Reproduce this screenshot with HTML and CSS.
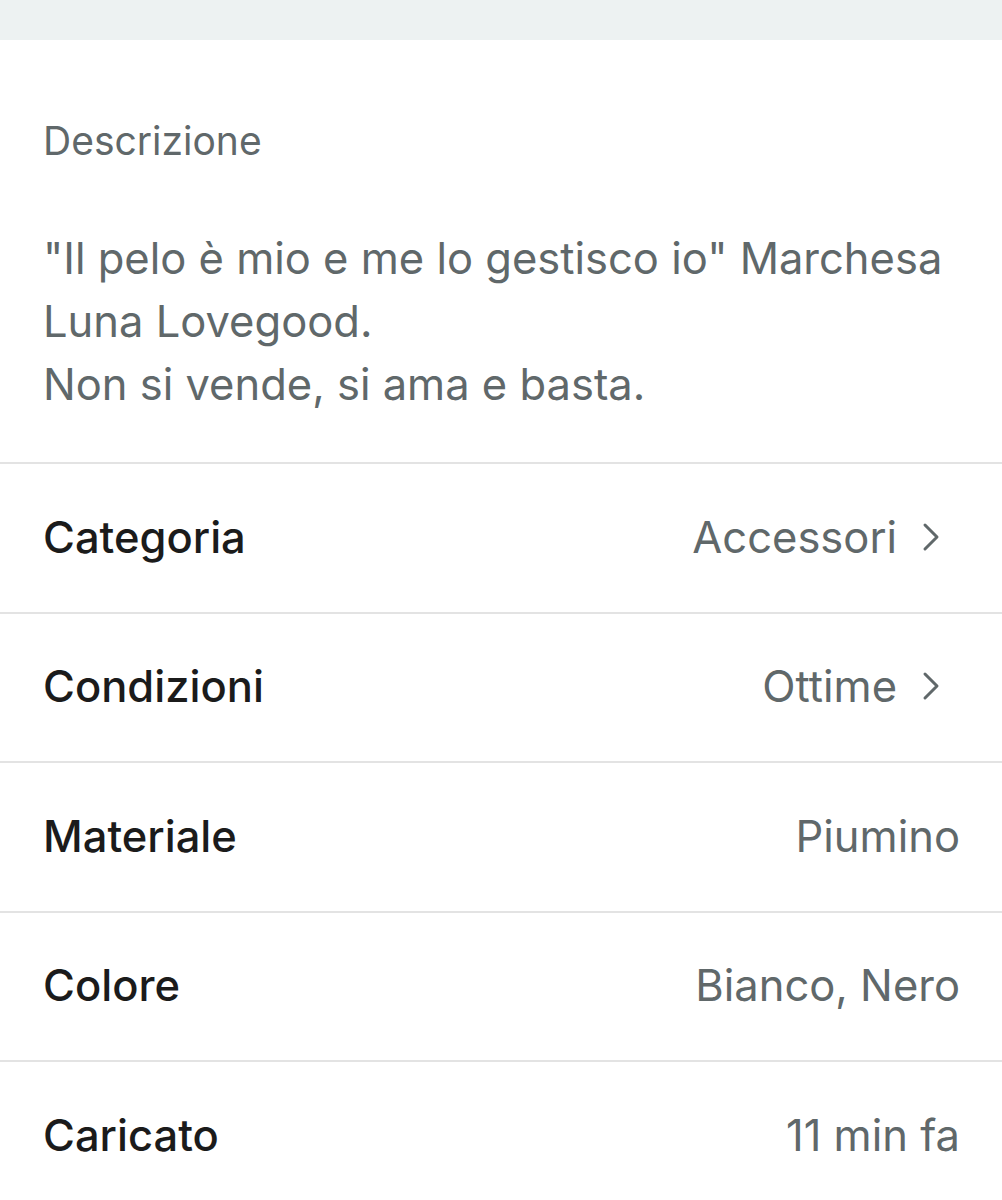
FILE: index.html
```html
<!DOCTYPE html>
<html lang="it">
<head>
    <meta charset="UTF-8">
    <meta name="viewport" content="width=device-width, initial-scale=1.0">
    <title>Dettagli articolo</title>
    <link rel="stylesheet" href="styles.css">
</head>
<body>
    <div class="top-band"></div>

    <section class="description">
        <h2 class="section-title">Descrizione</h2>
        <p class="description-text">"Il pelo è mio e me lo gestisco io" Marchesa Luna Lovegood.<br>Non si vende, si ama e basta.</p>
    </section>

    <ul class="details">
        <li class="detail-row">
            <span class="detail-label">Categoria</span>
            <span class="detail-value">Accessori</span>
            <svg class="chevron" viewBox="0 0 18 30" aria-hidden="true"><path d="M3 3 L15 15 L3 27"/></svg>
        </li>
        <li class="detail-row">
            <span class="detail-label">Condizioni</span>
            <span class="detail-value">Ottime</span>
            <svg class="chevron" viewBox="0 0 18 30" aria-hidden="true"><path d="M3 3 L15 15 L3 27"/></svg>
        </li>
        <li class="detail-row">
            <span class="detail-label">Materiale</span>
            <span class="detail-value">Piumino</span>
        </li>
        <li class="detail-row">
            <span class="detail-label">Colore</span>
            <span class="detail-value">Bianco, Nero</span>
        </li>
        <li class="detail-row">
            <span class="detail-label">Caricato</span>
            <span class="detail-value">11 min fa</span>
        </li>
    </ul>
</body>
</html>
```

FILE: styles.css
```css
body { font-family: Inter, "Noto Sans", sans-serif; margin: 0; padding: 0; background: #fff; color: #1b1b1b; }

.top-band { height: 40px; background: #edf2f2; }

.description { padding: 77px 42px 46px 43px; border-bottom: 2px solid #e3e3e3; }
.section-title { margin: 0; font-size: 39px; font-weight: 400; line-height: 48px; color: #60686a; }
.description-text { margin: 62px 0 0; font-size: 43.5px; font-weight: 400; line-height: 63px; color: #60686a; }

.details { list-style: none; margin: 0; padding: 0; }
.detail-row {
    display: flex;
    align-items: center;
    height: 147.5px;
    padding: 0 42px 0 43px;
    border-bottom: 2px solid #e3e3e3;
}
.detail-row:last-child { border-bottom: none; }
.detail-label { flex: 1; font-size: 43.5px; font-weight: 500; color: #1b1b1b; margin-top: -2px; }
.detail-value { font-size: 43.5px; font-weight: 400; color: #60686a; margin-top: -2px; }
.chevron {
    width: 18px;
    height: 30px;
    margin: -2px 20px 0 25px;
    fill: none;
    stroke: #60686a;
    stroke-width: 3;
    stroke-linecap: round;
    stroke-linejoin: round;
}
```
